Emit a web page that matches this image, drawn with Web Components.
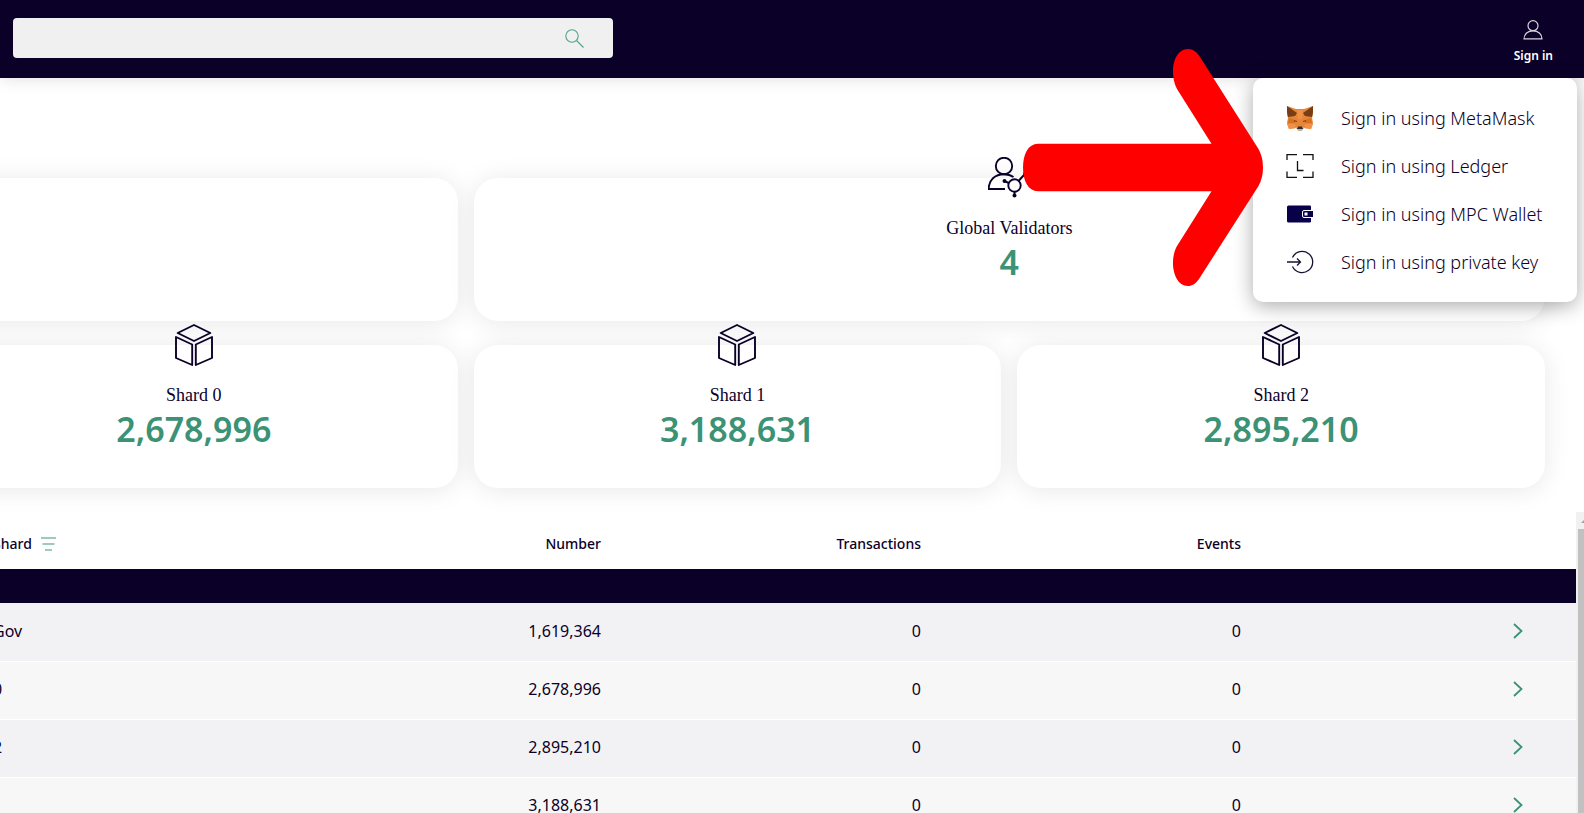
<!DOCTYPE html>
<html lang="en">
<head>
<meta charset="utf-8">
<title>Explorer</title>
<style>
html, body { margin: 0; }
body {
  --ink: #0b0028; --green: #3b9274; --card-shadow: 0 2px 26px #00000018;
  color: var(--ink); background: #fff;
  font-family: "Noto Sans", sans-serif; font-size: 16px; line-height: 24px;
  height: 100vh; overflow: hidden;
}
</style>
</head>
<body>
<explorer-app></explorer-app>
<script>
const define = (name, html, setup) => customElements.define(name, class extends HTMLElement {
  connectedCallback() {
    if (this.shadowRoot) return;
    const root = this.attachShadow({ mode: 'open' });
    root.innerHTML = html;
    if (setup) setup(this, root);
  }
});

const ICONS = {
  search: [19, 19, '<g fill="none" stroke="#4fa387" stroke-width="1.1"><circle cx="7" cy="7" r="6.2"/><path d="M11.5 11.5L18.5 18.5"/></g>'],
  user: [20, 20, '<g fill="none" stroke="#d8d4de" stroke-width="1.2"><circle cx="10" cy="5.7" r="5"/><path d="M1 18.9C1 14 5 10.8 10 10.8S19 14 19 18.9Z"/></g>'],
  cube: [40, 42, '<g fill="none" stroke="#0b0028" stroke-width="1.9" stroke-linejoin="round"><path d="M20 1L36.300 9L20 17L3.700 9Z"/><path d="M2 13L18.200 20.500V41L2 34Z"/><path d="M38 13L21.800 20.500V41L38 34Z"/></g>'],
  validators: [42, 42, '<g fill="none" stroke="#0b0028" stroke-width="1.9"><circle cx="16" cy="9" r="8.200"/><path d="M17 32H.7C.7 23 7 17.200 16 17.200C20 17.200 23 18.200 25.500 20"/><circle cx="26.500" cy="28.500" r="6.200"/><path d="M16 24L21 26M30.500 24L36 18M26.500 35V38"/></g><g fill="#0b0028"><circle cx="16.500" cy="24" r="2"/><circle cx="26.500" cy="38.500" r="2"/><circle cx="37" cy="17" r="2"/></g>'],
  metamask: [28, 26, '<path fill="#e88535" d="M1 1L10 4H18L27 1V9L26 13L27 18L25 24L18 23L16 25H12L10 23L3 24L1 18L2 13L1 9Z"/><path fill="#763d16" d="M1 1L11 8L9 11L2 12L1 7ZM27 1L17 8L19 11L26 12L27 7Z"/><path fill="#f0914a" d="M11 5H17L16 14H12ZM1 19H9L10 23L3 24ZM27 19H19L18 23L25 24Z"/><path fill="#d9701f" d="M3 13L9 15V18L2 18ZM25 13L19 15V18L26 18Z"/><path fill="#5a4a4a" d="M8 15L11 16V17L8 16.500ZM20 15L17 16V17L20 16.500Z"/><path fill="#c5b7aa" d="M10 22H18L16 26H12Z"/><path fill="#25303c" d="M12 21.500H16L17 24H11Z"/>'],
  ledger: [28, 26, '<path fill="none" stroke="#111" stroke-width="1.3" d="M1 7V1.600H11M17 1.600H27V7M1 18.500V24.400H11M17 24.400H27V18.500M11.500 8V17.500H17.500"/>'],
  wallet: [28, 26, '<path fill="#09004a" d="M2.500 4.500H24Q25 4.500 25 5.500V20.500Q25 21.500 24 21.500H2.500Q1 21.500 1 20V6Q1 4.500 2.500 4.500Z"/><path fill="#09004a" stroke="#fff" d="M18 9.500H27.500V16.500H18Q16.500 16.500 16.500 15V11Q16.500 9.500 18 9.500Z"/><rect x="18.500" y="11.500" width="3" height="3" fill="#fff"/>'],
  key: [28, 26, '<g fill="none" stroke="#1b1135" stroke-width="1.3"><path d="M6.500 8.500A10.600 10.600 0 1 1 6.500 17.500M1 13H14.500M11 9.500L14.500 13L11 16.500"/></g>'],
  filter: [15, 14, '<path fill="none" stroke="#7dbba5" stroke-width="1.300" d="M0 1H15M1.500 7H13.500M4 13H11"/>'],
  chevron: [10, 16, '<path fill="none" stroke="#3b9274" stroke-width="1.800" d="M1 1L8.500 8L1 15"/>']
};
define('app-icon', '<style>:host{display:block;flex:none}svg{display:block}</style>', (el, root) => {
  const [w, h, shape] = ICONS[el.getAttribute('name')];
  root.innerHTML += `<svg width="${w}" height="${h}" viewBox="0 0 ${w} ${h}" aria-hidden="true">${shape}</svg>`;
});

define('search-box', `<style>
:host{display:block;width:600px;max-width:60%}
form{display:flex;align-items:center;height:40px;border-radius:4px;background:#f0f0f0;padding-right:29px}
input{flex:1;min-width:0;height:40px;box-sizing:border-box;border:0;background:none;padding:0 16px;font:inherit;color:inherit;outline:0}
button{border:0;background:none;padding:0}
</style><form role="search"><input type="text" aria-label="Search"><button type="button" aria-label="Search"><app-icon name="search"></app-icon></button></form>`);

define('app-header', `<style>
:host{display:flex;align-items:center;justify-content:space-between;height:78px;padding:0 31px 2px 13px;background:var(--ink);box-shadow:0 0 16px #0002;position:relative;box-sizing:border-box}
button{display:flex;flex-direction:column;align-items:center;gap:8px;border:0;padding:8px 0 0;background:none;color:#fff;font:600 12px/16px "Noto Sans",sans-serif}
</style><search-box></search-box><button type="button"><app-icon name="user"></app-icon>Sign in</button>`);

define('menu-item', `<style>
:host{display:block}
button{display:flex;align-items:center;gap:27px;width:100%;height:48px;padding:0 33px;border:0;background:none;color:var(--ink);font:300 18px/24px "Noto Sans",sans-serif;white-space:nowrap;text-align:left}
</style><button type="button"><slot name="icon"></slot><span><slot></slot></span></button>`);

define('sign-in-menu', `<style>
:host{display:block;position:absolute;top:78px;right:7px;width:324px;padding:16px 0;box-sizing:border-box;border-radius:10px;background:#fff;box-shadow:0 4px 20px #0005}
</style>
<menu-item><app-icon slot="icon" name="metamask"></app-icon>Sign in using MetaMask</menu-item>
<menu-item><app-icon slot="icon" name="ledger"></app-icon>Sign in using Ledger</menu-item>
<menu-item><app-icon slot="icon" name="wallet"></app-icon>Sign in using MPC Wallet</menu-item>
<menu-item><app-icon slot="icon" name="key"></app-icon>Sign in using private key</menu-item>`);

define('stat-card', `<style>
:host{display:flex;flex-direction:column;align-items:center;height:143px;border-radius:24px;background:#fff;box-shadow:var(--card-shadow)}
.icon{height:42px;margin-top:-21px}
.label{margin-top:17px;font:18px/24px "Liberation Serif",serif}
.value{margin-top:2px;font-size:34px;line-height:40px;font-weight:600;color:var(--green)}
</style><div class="icon"><slot name="icon"></slot></div><div class="label"><slot></slot></div><div class="value"><slot name="value"></slot></div>`);

define('stat-grid', `<style>
:host{display:grid;grid-template-columns:repeat(3,1fr);gap:24px 16px;margin:100px 39px 0 -70px}
.wide{grid-column:span 2}
.blank{border-radius:24px;box-shadow:var(--card-shadow)}
</style>
<div class="blank"></div>
<stat-card class="wide"><app-icon slot="icon" name="validators"></app-icon>Global Validators<span slot="value">4</span></stat-card>
<stat-card><app-icon slot="icon" name="cube"></app-icon>Shard 0<span slot="value">2,678,996</span></stat-card>
<stat-card><app-icon slot="icon" name="cube"></app-icon>Shard 1<span slot="value">3,188,631</span></stat-card>
<stat-card><app-icon slot="icon" name="cube"></app-icon>Shard 2<span slot="value">2,895,210</span></stat-card>`);

define('block-table', `<style>
:host{display:block}
table{width:100%;border-collapse:collapse;table-layout:fixed}
th,td{padding:0 15px 0 17px;text-align:right;box-sizing:border-box}
th{height:57px;padding-top:6px;font-size:14px;font-weight:500}
th:first-child,td:first-child{text-align:left}
th span{display:flex;align-items:center;gap:9px}
.band td{height:34px;background:var(--ink)}
.row td{height:58px;padding-bottom:2px;border-bottom:1px solid #fff;background:#f7f7f7}
.odd td{background:#f2f2f5}
a{display:block;width:10px;margin:0 38px 0 auto}
</style><table><thead><tr><th><span>Shard <app-icon name="filter"></app-icon></span></th><th>Number</th><th>Transactions</th><th>Events</th><th></th></tr></thead><tbody><tr class="band"><td colspan="5"></td></tr></tbody></table>`, (el, root) => {
  const rows = [['Gov', '1,619,364'], ['0', '2,678,996'], ['2', '2,895,210'], ['1', '3,188,631']];
  root.querySelector('tbody').insertAdjacentHTML('beforeend', rows.map(([shard, n], i) =>
    `<tr class="row ${i % 2 ? '' : 'odd'}"><td>${shard}</td><td>${n}</td><td>0</td><td>0</td><td><a href="#${n}" aria-label="Open block ${n}"><app-icon name="chevron"></app-icon></a></td></tr>`).join(''));
});

define('scroll-rail', `<style>
:host{display:block;background:#f1f1f1;overflow:hidden}
svg{display:block}
.thumb{height:100%;margin-left:2px;background:#c1c1c1}
</style><svg width="8" height="17" aria-hidden="true"><path fill="#a3a3a3" d="M5 11L9 7V11Z"/></svg><div class="thumb"></div>`);

define('pointer-arrow', `<style>
:host{display:block;position:absolute;top:48px;right:320px;pointer-events:none}
svg{display:block}
</style><svg width="242" height="240" viewBox="1022 48 242 240" aria-hidden="true"><path fill="#f00" d="M1038 143.700H1211.500L1177 89C1169 74 1173 49 1188 49C1193 49 1197 52 1200 57L1258.500 149Q1263 157 1263 167.500Q1263 178 1258.500 186L1199 279C1196 283.500 1192 286 1188 286C1173 286 1169 260 1177 246L1211.500 191.300H1038C1028 191 1023 181 1023 167.500C1023 154 1028 144 1038 143.700Z"/></svg>`);

define('explorer-app', `<style>
:host{display:flex;flex-direction:column;position:relative;height:100%;overflow:hidden}
main{flex:1;min-height:0}
.blocks{display:grid;grid-template-columns:minmax(0,1fr) 8px;margin-top:24px}
block-table{margin-left:-24px}
</style><app-header></app-header><main><stat-grid></stat-grid><div class="blocks"><block-table></block-table><scroll-rail></scroll-rail></div></main><sign-in-menu></sign-in-menu><pointer-arrow></pointer-arrow>`);
</script>
</body>
</html>
